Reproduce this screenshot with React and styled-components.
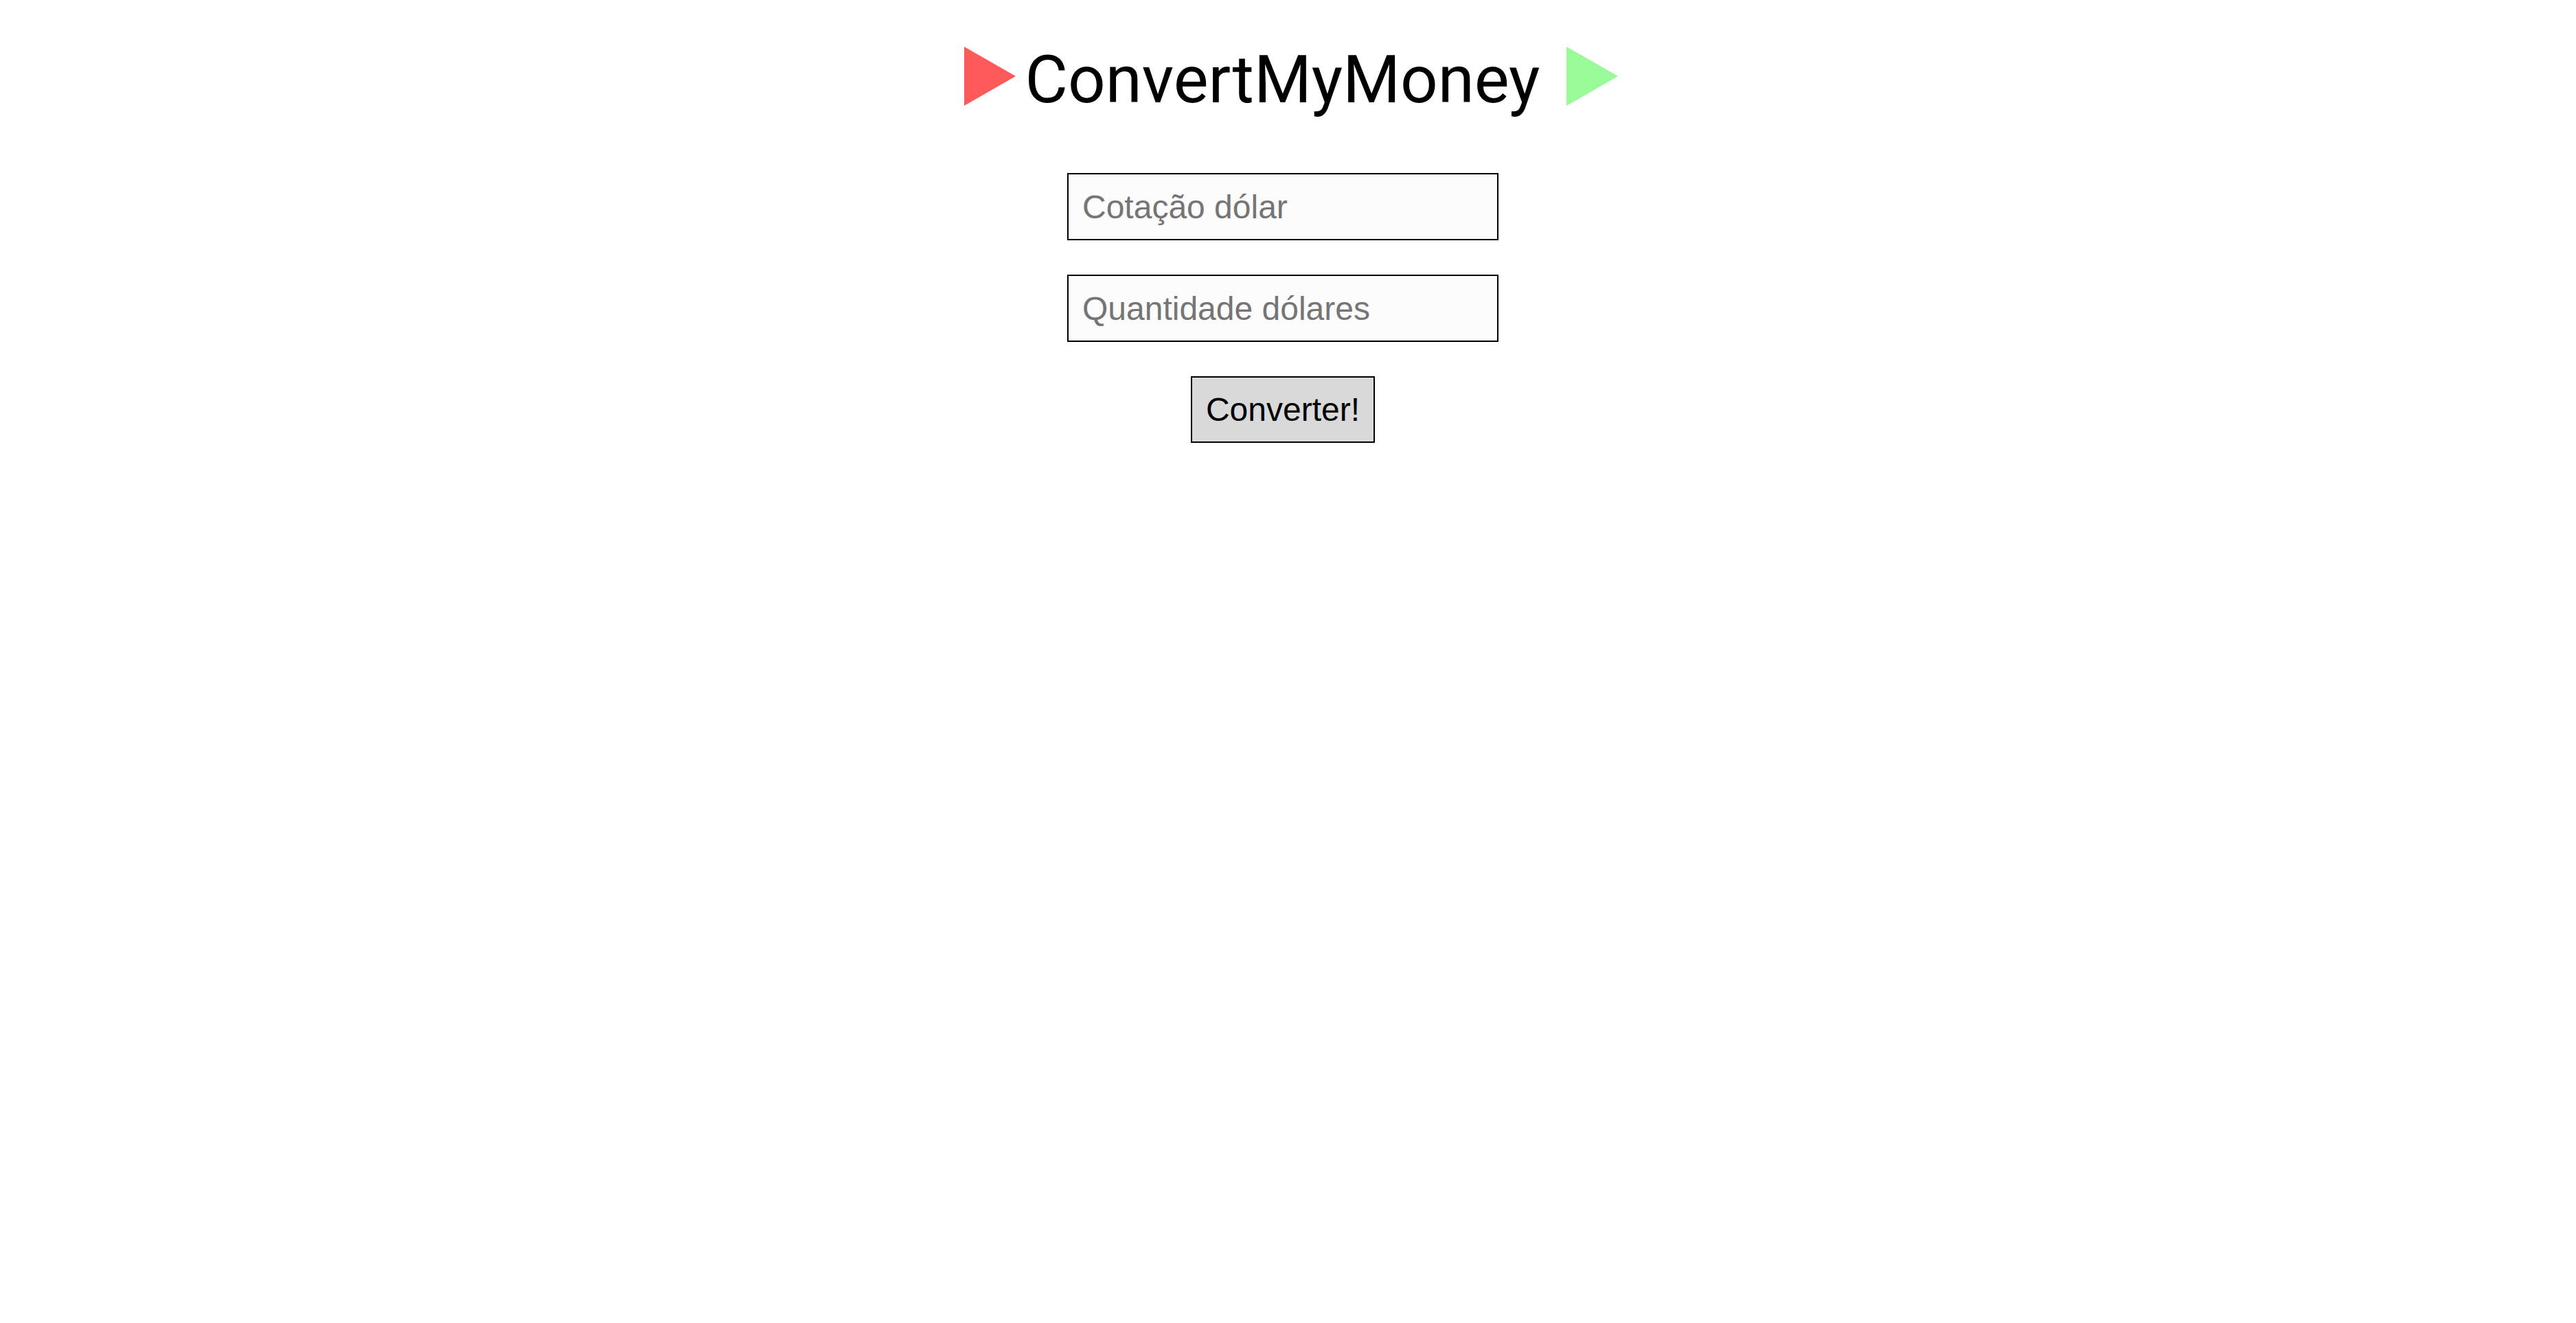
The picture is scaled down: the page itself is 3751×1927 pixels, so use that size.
import styled, { createGlobalStyle } from "styled-components";

const GlobalStyle = createGlobalStyle`
  body {
    margin: 0;
    background: #ffffff;
    font-family: "Liberation Sans", Arial, sans-serif;
  }
`;

const Page = styled.div`
  display: flex;
  flex-direction: column;
  align-items: center;
  padding: 60px 15px 0 0;
`;

const Header = styled.header`
  display: flex;
  align-items: center;
  padding-left: 24px;
`;

const Arrow = styled.span`
  display: block;
  width: 0;
  height: 0;
  border-left: 75px solid ${(p) => p.color};
  border-top: 43px solid transparent;
  border-bottom: 43px solid transparent;
  margin-bottom: 10px;
  margin-left: ${(p) => p.gap || 0}px;
  margin-right: ${(p) => p.after || 0}px;
`;

const Title = styled.h1`
  margin: 0;
  font-family: Roboto, "Noto Sans", sans-serif;
  font-weight: 400;
  font-size: 96px;
  color: #000;
`;

const Form = styled.form`
  display: flex;
  flex-direction: column;
  align-items: center;
  gap: 50px;
  margin-top: 80px;
`;

const Input = styled.input`
  box-sizing: border-box;
  width: 628px;
  height: 98px;
  padding: 0 20px;
  border: 2px solid #000;
  border-radius: 0;
  background: #fcfcfc;
  font-family: "Liberation Sans", Arial, sans-serif;
  font-size: 48px;
  color: #000;
  outline: none;

  &::placeholder {
    color: #757575;
  }
`;

const Button = styled.button`
  box-sizing: border-box;
  height: 97px;
  padding: 0 20px;
  border: 2px solid #000;
  border-radius: 0;
  background: #d9d9d9;
  font-family: "Liberation Sans", Arial, sans-serif;
  font-size: 48px;
  color: #000;
  cursor: pointer;
`;

const App = () => {
  return (
    <>
      <GlobalStyle />
      <Page>
        <Header>
          <Arrow color="#ff5a5a" after={14} />
          <Title>ConvertMyMoney</Title>
          <Arrow color="#98fb98" gap={39} />
        </Header>
        <Form onSubmit={(e) => e.preventDefault()}>
          <Input type="text" placeholder="Cotação dólar" />
          <Input type="text" placeholder="Quantidade dólares" />
          <Button type="submit">Converter!</Button>
        </Form>
      </Page>
    </>
  );
};

export default App;
